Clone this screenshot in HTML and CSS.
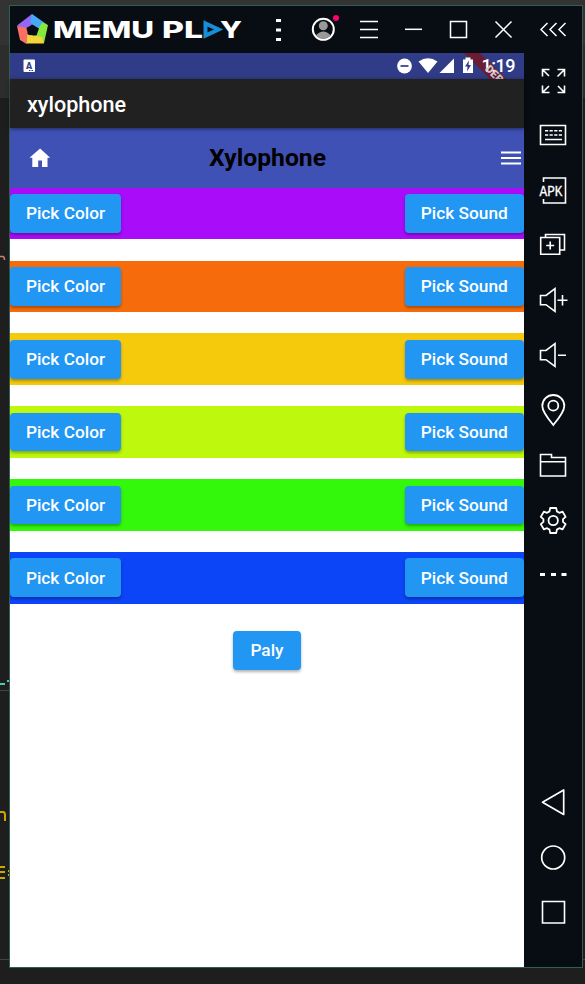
FILE: index.html
```
<!DOCTYPE html>
<html lang="en">
<head>
<meta charset="utf-8">
<title>xylophone</title>
<link rel="stylesheet" href="styles.css">
</head>
<body>
<div class="desktop">
  <svg class="editor" width="585" height="984">
    <rect width="585" height="984" fill="#1e1e1e"/>
    <rect width="585" height="98" fill="#2d2d2d"/>
    <rect width="585" height="45" fill="#333333"/>
    <path d="M0 690.5H9M0 959.5H9M583 959.5H585" stroke="#444"/>
    <path d="M0 256.5H3Q4.500 257 4.500 260" stroke="#ce8468" stroke-width="1.500" fill="none"/>
    <path d="M0 684H5M7 681H9" stroke="#4ec9b0" stroke-width="2"/>
    <path d="M0 812H3Q5 812 5 815V821M0 867H5M0 872H5M0 878H5M8 871H9M8 875H9" stroke="#cca700" stroke-width="2" fill="none"/>
  </svg>
  <main class="window">
    <header class="titlebar">
      <svg class="brand" width="246" height="47" viewBox="10 6 246 47">
        <path d="M32 14 17 25.500 23 29 35 24.500Z" fill="#9268f5"/>
        <path d="M32 14 47 24.500 42 33 30 22Z" fill="#45a9f7"/>
        <path d="M48 25 44 43 33 38 42 22.500Z" fill="#86e83b"/>
        <path d="M44 43.500 26 43.500 27 34 42 37Z" fill="#f0d63c"/>
        <path d="M26.500 44 20 40 17 26 28 28Z" fill="#fb7064"/>
        <path d="M32 24.500 39 28.500 36.500 35.500 28.500 35 26.500 28.500Z" fill="#080c13"/>
        <text class="logo-text" x="53" y="37.500" textLength="101" lengthAdjust="spacingAndGlyphs">MEMU</text>
        <text class="logo-text" x="162" y="37.500" textLength="41" lengthAdjust="spacingAndGlyphs">PL</text>
        <path d="M205.500 23.500V35.500L218.500 29.500Z" fill="none" stroke="#178fd8" stroke-width="4"/>
        <text class="logo-text" x="220" y="37.500" textLength="22" lengthAdjust="spacingAndGlyphs">Y</text>
      </svg>
      <svg class="control" viewBox="0 0 45 47"><path d="M20 14.500h5M20 24h5M20 33.500h5" stroke-width="3"/></svg>
      <svg class="control" viewBox="0 0 45 47"><circle cx="22.300" cy="23.300" r="10.500" stroke-width="2"/><circle cx="22.300" cy="19.800" r="4.500" fill="#999" stroke="none"/><path d="M14.800 29.500Q22.300 21.500 29.800 29.500 22.300 36.500 14.800 29.500Z" fill="#999" stroke="none"/><circle cx="35" cy="12" r="3" fill="#ff006e" stroke="none"/></svg>
      <svg class="control" viewBox="0 0 45 47"><path d="M14 15.500h18M14 23.500h18M14 31.500h18"/></svg>
      <svg class="control" viewBox="0 0 45 47"><path d="M14 23.300h17"/></svg>
      <svg class="control" viewBox="0 0 45 47"><path d="M14.500 15.500h16v16h-16z"/></svg>
      <svg class="control" viewBox="0 0 45 47"><path d="m14.500 15.500 16 16m0-16-16 16"/></svg>
      <svg class="control" viewBox="0 0 45 47"><path d="m21.500 17-6.500 6.500 6.500 6.500M30.500 17 24 23.500l6.500 6.500M39.500 17 33 23.500l6.500 6.500"/></svg>
    </header>
    <div class="body">
      <section class="screen">
        <div class="status">
          <svg width="514" height="26" viewBox="10 53 514 26">
            <rect x="23.500" y="59.500" width="11.500" height="12.500" rx="1" fill="#fff"/>
            <text class="a-mark" x="26" y="69">A</text>
            <path d="M29 70.500h5" stroke="#303f8a" stroke-dasharray="1.500 1"/>
            <circle cx="404.500" cy="66" r="7.400" fill="#fff"/><path d="M400.500 66h8" stroke="#303c87" stroke-width="1.700"/>
            <path d="M418.500 61.500Q428 55 437.500 61.500L428 73Z" fill="#fff"/>
            <path d="M454 58.500V73H439.500Z" fill="#fff"/>
            <path d="M464 53H480L507 80H491Z" fill="#691c33"/>
            <path d="M463 59.500h2.500V57.500h5v2H473V73H463Z" fill="#fff"/>
            <path d="m469 60.500-4 6h2.500l-.5 5 4-6.500h-2.500z" fill="#303c87"/>
            <text class="clock" x="481.500" y="72.300" textLength="34">1:19</text>
            <text class="debug" transform="translate(484.500 69.500) rotate(45)">DEB</text>
          </svg>
        </div>
        <h1 class="appbar">xylophone</h1>
        <nav class="toolbar">
          <svg width="24" height="24" viewBox="0 0 24 24"><path d="M10.200 21V14.500h3.800V21h5.500v-9.200h2.700L12.100 2.500 1.500 11.800h2.800V21z" fill="#fff"/></svg>
          <h2>Xylophone</h2>
          <svg width="26" height="24" viewBox="0 0 26 24"><path d="M3 6.500h20M3 12h20M3 17.500h20" stroke="#fff" stroke-width="2.200"/></svg>
        </nav>
        <div class="keys">
          <div class="key purple"><button>Pick Color</button><button class="sound">Pick Sound</button></div>
          <div class="key orange"><button>Pick Color</button><button class="sound">Pick Sound</button></div>
          <div class="key yellow"><button>Pick Color</button><button class="sound">Pick Sound</button></div>
          <div class="key lime"><button>Pick Color</button><button class="sound">Pick Sound</button></div>
          <div class="key green"><button>Pick Color</button><button class="sound">Pick Sound</button></div>
          <div class="key blue"><button>Pick Color</button><button class="sound">Pick Sound</button></div>
        </div>
        <button class="play">Paly</button>
      </section>
      <aside class="sidebar">
        <svg viewBox="0 0 30 31"><path d="M4.500 11.500v-7h7M5 5l6 6M19.500 4.500h7v7M26 5l-6.500 6.500M4.500 20.500v7h7M5 27l6-6M19.500 27.500h7v-7M26 27l-6-6"/></svg>
        <svg viewBox="0 0 30 31"><path d="M2.500 5.500h25v19h-25zM7 19.500h17"/><path d="M7 10.700h17M7 15h17" stroke-dasharray="3.200 1.400"/></svg>
        <svg viewBox="0 0 30 31"><path d="M5.500 7V3h22v25h-22v-4"/><text class="apk" x="1.500" y="21.300" textLength="23" lengthAdjust="spacingAndGlyphs">APK</text></svg>
        <svg viewBox="0 0 30 31"><path d="M2.700 7.500h19v16.700h-19zM7.500 7.500v-3h19v15.500h-4.800M12.200 11.500v8M8.200 15.500h8"/></svg>
        <svg viewBox="0 0 30 31"><path d="M2.500 10.500H8l9-6.800v22.800l-9-6.800H2.500zM24.500 10v10.500M19.500 15.200h10"/></svg>
        <svg viewBox="0 0 30 31"><path d="M2.500 10.500H8l9-6.800v22.800l-9-6.800H2.500zM20 15.200h8"/></svg>
        <svg viewBox="0 0 30 31"><path stroke-width="1.800" d="M15.300 30C9 22.500 4.300 16 4.300 11a11 11 0 0 1 22 0c0 5-4.700 11.500-11 19z"/><circle cx="15.300" cy="10.700" r="5" stroke-width="1.800"/></svg>
        <svg viewBox="0 0 30 31"><path d="M2.500 4.500h11v3h14v18.500h-25zM2.500 11.700h25"/></svg>
        <svg viewBox="0 0 30 31"><path stroke-width="1.800" stroke-linejoin="round" d="M12.200 3H18.200L18.900 6.400 21.300 7.800 24.600 6.700 27.600 11.900 25 14.100V16.900L27.600 19.100 24.600 24.300 21.300 23.200 18.900 24.600 18.200 28H12.200L11.500 24.600 9.100 23.200 5.800 24.300 2.800 19.100 5.400 16.900V14.100L2.800 11.900 5.800 6.700 9.100 7.800 11.500 6.400Z"/><circle cx="15.200" cy="15.500" r="4.700" stroke-width="1.800"/></svg>
        <svg viewBox="0 0 30 31"><path d="M2 14.500h5M13 14.500h5M23.500 14.500h5" stroke-width="3"/></svg>
        <svg class="back" viewBox="0 0 30 31"><path stroke-width="1.700" stroke-linejoin="round" d="M4.500 15.300 25.700 3v24.500z"/></svg>
        <svg viewBox="0 0 30 31"><circle cx="15.200" cy="15.500" r="11.500" stroke-width="1.700"/></svg>
        <svg viewBox="0 0 30 31"><path d="M4.500 4.500h22v21.500h-22z"/></svg>
      </aside>
    </div>
  </main>
</div>
</body>
</html>
```
FILE: styles.css
```
* { box-sizing: border-box; }
body { margin: 0; font-family: Roboto, sans-serif; background: #1e1e1e; }
.desktop { position: relative; width: 585px; height: 984px; padding: 5px 0 0 9px; overflow: hidden; }
.editor { position: absolute; left: 0; top: 0; }
.window { position: relative; width: 574px; height: 963px; border: 1px solid #2f5f54; background: #080c13; }
.titlebar { display: flex; height: 47px; overflow: hidden; }
.brand { flex: none; }
.control { flex: none; width: 45px; height: 47px; fill: none; stroke: #fff; stroke-width: 1.5; }
.logo-text { font: 800 23px Inter, sans-serif; fill: #fff; }
.body { display: flex; height: 914px; }
.screen { width: 514px; background: #fff; display: flex; flex-direction: column; }
.status { height: 26px; background: #303c87; }
.status svg { display: block; }
.a-mark { font: 900 9px Roboto, sans-serif; fill: #303c87; }
.clock { font: 500 18px Roboto, sans-serif; fill: #fff; }
.debug { font: 900 11px Roboto, sans-serif; fill: #d8c8d0; }
.appbar { margin: 0; height: 49px; padding-left: 17px; background: #212121; color: #fff; font-size: 21.6px; font-weight: 500; line-height: 51px; position: relative; box-shadow: 0 1px 4px rgba(0,0,0,.5); }
.toolbar { height: 59.7px; padding: 0 0 0 18px; background: #3f51b5; display: flex; align-items: center; }
.toolbar h2 { flex: 1; margin: 0 0 1px; padding-right: 15px; text-align: center; font-size: 24.7px; font-weight: 700; color: #000; }
.keys { display: flex; flex-direction: column; gap: 21.5px; }
.key { display: flex; justify-content: space-between; align-items: center; height: 51.4px; }
button { width: 111px; height: 38.8px; padding: 0; border: 0; border-radius: 4px; background: #2196f3; color: #fff; font: 500 17.3px Roboto, sans-serif; box-shadow: 0 2px 3px rgba(0,0,0,.3); }
.sound { width: 119.500px; }
.purple { background: #a80cf8; }
.orange { background: #f66c0c; }
.yellow { background: #f5ca0c; }
.lime { background: #bef80c; }
.green { background: #34f80c; }
.blue { background: #0c45f8; }
.play { width: 68px; align-self: center; margin-top: 27.5px; }
.sidebar { width: 58px; display: flex; flex-direction: column; align-items: center; padding: 12px 0 39px; gap: 24px; }
.sidebar svg { width: 30px; height: 31px; flex: none; overflow: visible; fill: none; stroke: #fff; stroke-width: 1.6; }
.sidebar .back { margin-top: auto; }
.sidebar .apk { font: 400 15px "Liberation Mono", monospace; fill: #fff; stroke: #fff; stroke-width: .3; }
```
